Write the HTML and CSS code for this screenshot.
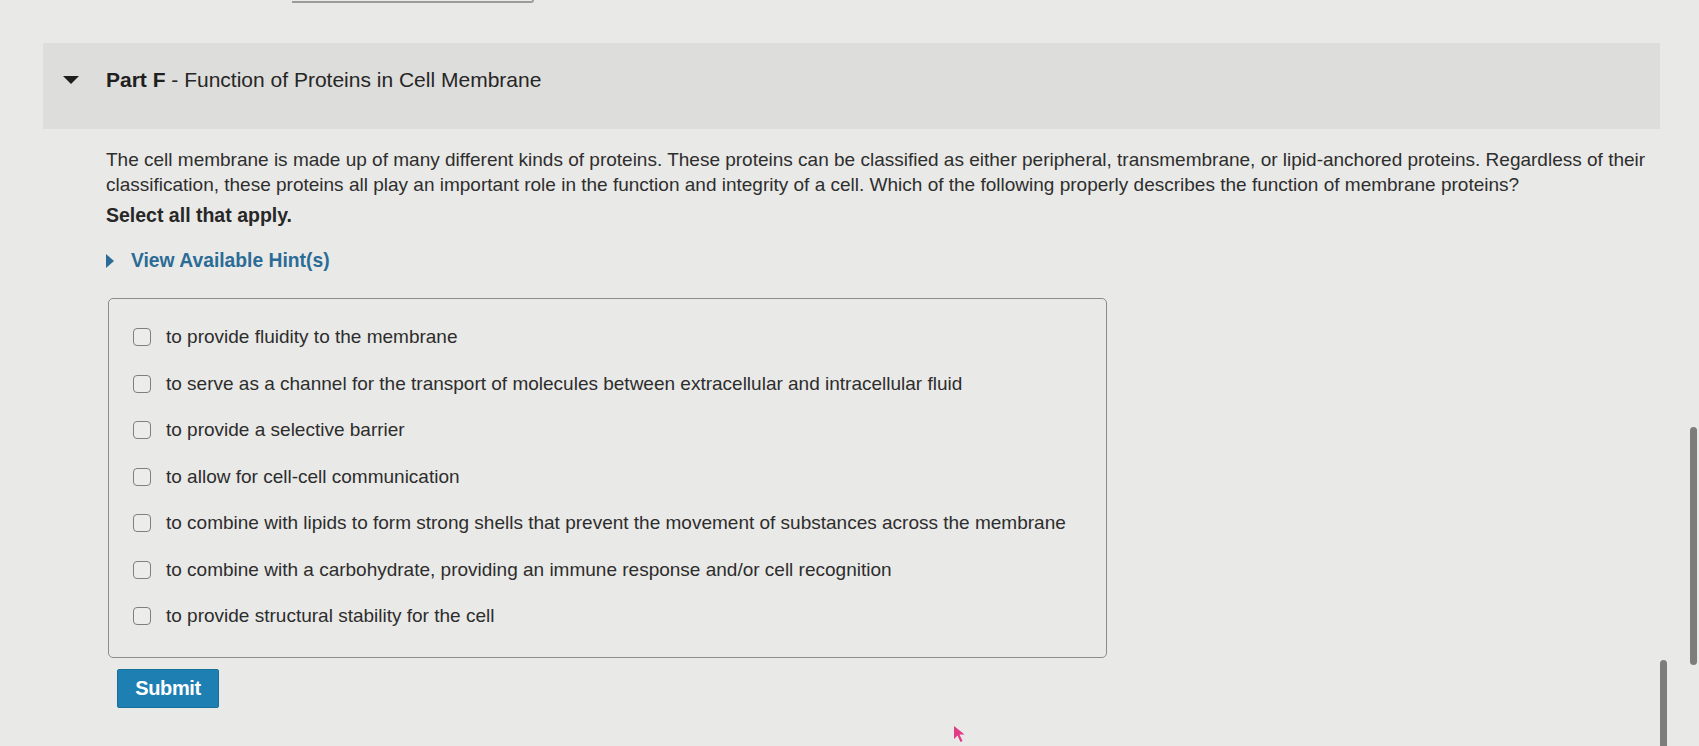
FILE: index.html
```html
<!DOCTYPE html>
<html lang="en">
<head>
<meta charset="utf-8">
<title>Part F - Function of Proteins in Cell Membrane</title>
<link rel="stylesheet" href="styles.css">
</head>
<body>
<div class="screen">
  <div class="top-tab"></div>

  <section class="part">
    <header class="part-head">
      <svg class="caret-down" width="16" height="8" viewBox="0 0 16 8"><path d="M0 0 H16 L8 8 Z" fill="#1e1e1e"/></svg>
      <h2 class="part-title"><b>Part F</b> - Function of Proteins in Cell Membrane</h2>
    </header>

    <div class="part-body">
      <p class="prompt">The cell membrane is made up of many different kinds of proteins. These proteins can be classified as either peripheral, transmembrane, or lipid-anchored proteins. Regardless of their classification, these proteins all play an important role in the function and integrity of a cell. Which of the following properly describes the function of membrane proteins?</p>
      <p class="instr">Select all that apply.</p>

      <div class="hint">
        <svg class="caret-right" width="8" height="14" viewBox="0 0 8 14"><path d="M0 0 L8 7 L0 14 Z" fill="#2b6c96"/></svg>
        <span>View Available Hint(s)</span>
      </div>

      <div class="choices">
        <label class="choice"><span class="box"></span><span>to provide fluidity to the membrane</span></label>
        <label class="choice"><span class="box"></span><span>to serve as a channel for the transport of molecules between extracellular and intracellular fluid</span></label>
        <label class="choice"><span class="box"></span><span>to provide a selective barrier</span></label>
        <label class="choice"><span class="box"></span><span>to allow for cell-cell communication</span></label>
        <label class="choice"><span class="box"></span><span>to combine with lipids to form strong shells that prevent the movement of substances across the membrane</span></label>
        <label class="choice"><span class="box"></span><span>to combine with a carbohydrate, providing an immune response and/or cell recognition</span></label>
        <label class="choice"><span class="box"></span><span>to provide structural stability for the cell</span></label>
      </div>

      <button class="submit" type="button">Submit</button>
    </div>
  </section>

  <div class="scroll-a"></div>
  <div class="scroll-b"></div>
  <svg class="cursor" width="14" height="18" viewBox="0 0 14 18"><path d="M1 1 L1 14 L4.5 10.5 L7.5 17 L9.5 16 L6.5 9.5 L11.5 9.5 Z" fill="#e23a86"/></svg>
</div>
</body>
</html>
```

FILE: styles.css
```css
* { box-sizing: border-box; }

html, body {
  margin: 0;
  padding: 0;
}

body {
  background: #e9e9e7;
  font-family: "Liberation Sans", Arial, Helvetica, sans-serif;
  color: #2b2b2b;
  width: 1699px;
  height: 746px;
  overflow: hidden;
}

.screen {
  position: relative;
  width: 1699px;
  height: 746px;
}

.top-tab {
  margin-left: 292px;
  width: 242px;
  height: 3px;
  border-bottom: 2px solid #9c9c9c;
  border-right: 2px solid #9c9c9c;
  border-bottom-right-radius: 4px;
}

.part {
  margin-top: 40px;
}

.part-head {
  margin-left: 43px;
  width: 1617px;
  height: 86px;
  background: #dddddb;
  display: flex;
  align-items: center;
  gap: 27px;
  padding-left: 20px;
  padding-bottom: 12px;
}

.part-title {
  margin: 0;
  font-size: 21px;
  font-weight: normal;
  color: #262626;
}

.part-title b {
  font-weight: bold;
  color: #1f1f1f;
}

.part-body {
  padding-left: 106px;
  padding-top: 18px;
}

.prompt {
  margin: 0;
  width: 1565px;
  font-size: 19px;
  line-height: 25px;
  color: #2e2e2e;
}

.instr {
  margin: 6px 0 0;
  font-size: 19.5px;
  line-height: 25px;
  font-weight: bold;
  color: #272727;
}

.hint {
  margin-top: 21px;
  display: flex;
  align-items: center;
  gap: 17px;
  color: #2b6c96;
  font-size: 19.3px;
  font-weight: bold;
  height: 24px;
}

.choices {
  margin-top: 25px;
  margin-left: 2px;
  width: 999px;
  border: 1px solid #8c8c8c;
  border-radius: 5px;
  padding: 15px 0 17px 24px;
  display: flex;
  flex-direction: column;
}

.choice {
  display: flex;
  align-items: center;
  gap: 15px;
  height: 46.5px;
  font-size: 19px;
  color: #2d2d2d;
}

.box {
  flex: none;
  width: 18px;
  height: 18px;
  border: 1.5px solid #808080;
  border-radius: 4px;
  background: #ececea;
}

.submit {
  margin-top: 11px;
  margin-left: 11px;
  width: 102px;
  height: 39px;
  border: 1px solid #176f9c;
  border-radius: 2px;
  background: #1e80b2;
  color: #ffffff;
  font-family: "Liberation Sans", Arial, Helvetica, sans-serif;
  font-size: 20px;
  font-weight: bold;
  letter-spacing: -0.4px;
  padding: 0;
}

.scroll-a {
  position: absolute;
  left: 1690px;
  top: 427px;
  width: 7px;
  height: 238px;
  border-radius: 4px;
  background: #7d7d7d;
}

.scroll-b {
  position: absolute;
  left: 1660px;
  top: 660px;
  width: 7px;
  height: 100px;
  border-radius: 4px;
  background: #7d7d7d;
}

.cursor {
  position: absolute;
  left: 953px;
  top: 725px;
}
```
